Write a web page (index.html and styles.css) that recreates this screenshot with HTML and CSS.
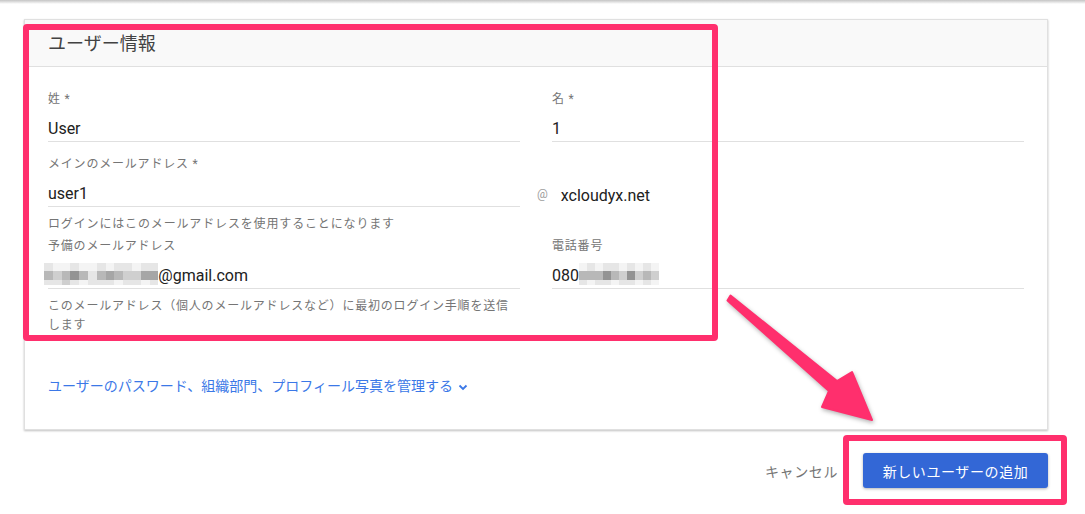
FILE: index.html
```html
<!DOCTYPE html>
<html lang="ja">
<head>
    <meta charset="UTF-8">
    <title>ユーザーの追加</title>
    <link rel="stylesheet" href="styles.css">
</head>
<body>
    <div class="topbar"></div>

    <div class="page">
        <div class="card">
            <div class="card-head">ユーザー情報</div>

            <div class="card-body">
                <div class="row">
                    <div class="field">
                        <div class="label">姓 *</div>
                        <div class="value">User</div>
                    </div>
                    <div class="field">
                        <div class="label">名 *</div>
                        <div class="value">1</div>
                    </div>
                </div>

                <div class="row row-mail">
                    <div class="field">
                        <div class="label">メインのメールアドレス *</div>
                        <div class="value">user1</div>
                        <div class="hint">ログインにはこのメールアドレスを使用することになります</div>
                    </div>
                    <div class="domain">
                        <span class="at">@</span>
                        <span class="domain-name">xcloudyx.net</span>
                    </div>
                </div>

                <div class="row row-tight">
                    <div class="field">
                        <div class="label">予備のメールアドレス</div>
                        <div class="value"><span class="mosaic mosaic-mail">
                            <i class="c1"></i><i class="c0"></i><i class="c0"></i><i class="c1"></i><i class="c0"></i><i class="c0"></i><i class="c1"></i><i class="c0"></i><i class="c1"></i><i class="c1"></i><i class="c0"></i><i class="c1"></i><i class="c1"></i>
                            <i class="c3"></i><i class="c2"></i><i class="c3"></i><i class="c5"></i><i class="c3"></i><i class="c1"></i><i class="c3"></i><i class="c4"></i><i class="c3"></i><i class="c2"></i><i class="c2"></i><i class="c4"></i><i class="c4"></i>
                            <i class="c1"></i><i class="c1"></i><i class="c2"></i><i class="c1"></i><i class="c0"></i><i class="c1"></i><i class="c1"></i><i class="c1"></i><i class="c0"></i><i class="c1"></i><i class="c1"></i><i class="c0"></i><i class="c1"></i>
                        </span>@gmail.com</div>
                        <div class="hint hint-wrap">このメールアドレス（個人のメールアドレスなど）に最初のログイン手順を送信します</div>
                    </div>
                    <div class="field">
                        <div class="label">電話番号</div>
                        <div class="value">080<span class="mosaic mosaic-tel">
                            <i class="c0"></i><i class="c1"></i><i class="c0"></i><i class="c1"></i><i class="c1"></i><i class="c0"></i><i class="c1"></i><i class="c0"></i><i class="c1"></i><i class="c0"></i>
                            <i class="c3"></i><i class="c3"></i><i class="c3"></i><i class="c5"></i><i class="c3"></i><i class="c2"></i><i class="c5"></i><i class="c2"></i><i class="c3"></i><i class="c2"></i>
                            <i class="c1"></i><i class="c0"></i><i class="c1"></i><i class="c1"></i><i class="c0"></i><i class="c1"></i><i class="c1"></i><i class="c0"></i><i class="c1"></i><i class="c0"></i>
                        </span></div>
                    </div>
                </div>

                <a class="more-link" href="#">ユーザーのパスワード、組織部門、プロフィール写真を管理する<svg class="chevron" width="12" height="12" viewBox="0 0 12 12"><path d="M2.5 4.5 L6 8 L9.5 4.5" fill="none" stroke="currentColor" stroke-width="1.8"/></svg></a>
            </div>
        </div>

        <div class="actions">
            <span class="cancel">キャンセル</span>
            <button class="primary">新しいユーザーの追加</button>
        </div>
    </div>

    <!-- 注釈 (ピンクの枠と矢印) -->
    <div class="mark mark-form"></div>
    <div class="mark mark-button"></div>
    <svg class="arrow" width="1085" height="514" viewBox="0 0 1085 514">
        <polygon points="730.5,295.5 837,381 852,372 872,420 822,407 829,391 727.5,300.5" fill="#ff2f6d" stroke="#ff2f6d" stroke-width="2" stroke-linejoin="round"/>
    </svg>
</body>
</html>
```

FILE: styles.css
```css
body {
    margin: 0;
    background: #fff;
    font-family: 'Roboto', 'Noto Sans CJK JP', sans-serif;
    color: #212121;
    width: 1085px;
    height: 514px;
    position: relative;
    overflow: hidden;
}
.topbar {
    height: 4px;
    background: linear-gradient(#c4c4c4, #fff);
}
.page {
    padding: 15px 37px 0 24px;
}
.card {
    border: 1px solid #e0e0e0;
    box-shadow: 0 1px 2px rgba(0, 0, 0, 0.25);
    background: #fff;
}
.card-head {
    background: #f9f9f9;
    border-bottom: 1px solid #e0e0e0;
    padding: 12px 23px 10px;
    font-size: 18px;
    line-height: 24px;
    color: #424242;
}
.card-body {
    padding: 24px 23px 33px;
}
.row {
    display: flex;
    gap: 32px;
    margin-bottom: 14px;
}
.row-tight {
    margin-top: -9px;
}
.field {
    width: 472px;
    display: flex;
    flex-direction: column;
}
.label {
    font-size: 12px;
    line-height: 16px;
    letter-spacing: 0.8px;
    color: #757575;
}
.value {
    font-size: 16px;
    line-height: 20px;
    height: 20px;
    padding: 12px 0 2px;
    border-bottom: 1px solid #e0e0e0;
    white-space: nowrap;
}
.hint {
    font-size: 12px;
    line-height: 18px;
    letter-spacing: 0.85px;
    color: #757575;
    margin-top: 8px;
}
.hint-wrap {
    max-width: 468px;
    line-height: 19px;
    letter-spacing: 0.8px;
}
.domain {
    display: flex;
    align-items: center;
    margin-left: -15px;
    padding-top: 28px;
    height: 20px;
}
.at {
    font-size: 12px;
    color: #9e9e9e;
}
.domain-name {
    font-size: 16px;
    margin-left: 13px;
    margin-top: 3px;
}
.mosaic {
    display: inline-grid;
    grid-template-rows: 8px 9px 5px;
    vertical-align: top;
    margin-top: -3px;
    margin-bottom: -2px;
}
.mosaic i {
    display: block;
}
.mosaic-mail {
    grid-template-columns: repeat(13, 8.8px);
    margin-left: -4px;
}
.mosaic-tel {
    grid-template-columns: repeat(10, 8px);
}
.c0 { background: #f4f4f4; }
.c1 { background: #e6e6e6; }
.c2 { background: #cfcfcf; }
.c3 { background: #b8b8b8; }
.c4 { background: #a6a6a6; }
.c5 { background: #939393; }
.more-link {
    display: flex;
    width: fit-content;
    align-items: center;
    margin-top: 41px;
    font-size: 14px;
    line-height: 20px;
    color: #3b78e7;
    text-decoration: none;
}
.chevron {
    margin-left: 4px;
    margin-top: 2px;
}
.actions {
    display: flex;
    justify-content: flex-end;
    align-items: center;
    gap: 25px;
    margin-top: 23px;
}
.cancel {
    font-size: 14px;
    letter-spacing: 0.6px;
    color: #757575;
}
.primary {
    width: 185px;
    height: 35px;
    background: #3367d6;
    color: #fff;
    border: none;
    border-radius: 3px;
    font-family: inherit;
    font-size: 14px;
    letter-spacing: 0.6px;
    box-shadow: 0 1px 3px rgba(0, 0, 0, 0.3);
}
.mark {
    position: absolute;
    border: 6px solid #ff2f6d;
    border-radius: 4px;
    box-sizing: border-box;
    pointer-events: none;
}
.mark-form {
    left: 23px;
    top: 24px;
    width: 695px;
    height: 317px;
}
.mark-button {
    left: 843px;
    top: 435px;
    width: 224px;
    height: 70px;
}
.arrow {
    position: absolute;
    left: 0;
    top: 0;
    pointer-events: none;
    filter: drop-shadow(1px 2px 2px rgba(0, 0, 0, 0.3));
}
```
